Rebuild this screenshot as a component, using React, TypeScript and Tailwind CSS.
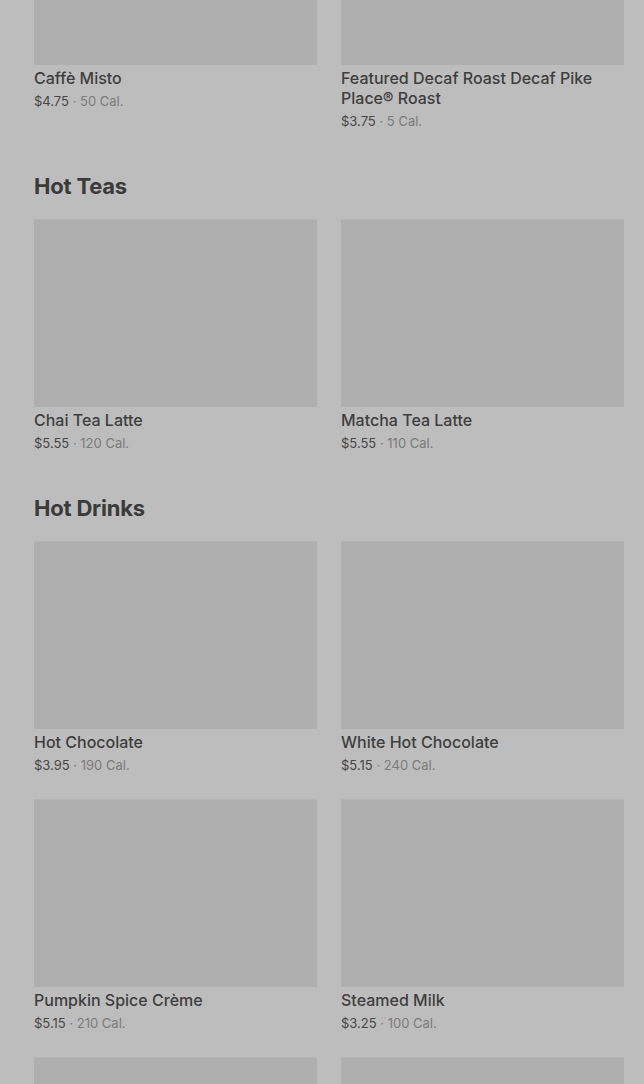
import React from "react";

type Item = { name: string; price: string; cal: string };

const sections: { title?: string; items: Item[] }[] = [
  {
    items: [
      { name: "Caffè Misto", price: "$4.75", cal: "50 Cal." },
      { name: "Featured Decaf Roast Decaf Pike Place® Roast", price: "$3.75", cal: "5 Cal." },
    ],
  },
  {
    title: "Hot Teas",
    items: [
      { name: "Chai Tea Latte", price: "$5.55", cal: "120 Cal." },
      { name: "Matcha Tea Latte", price: "$5.55", cal: "110 Cal." },
    ],
  },
  {
    title: "Hot Drinks",
    items: [
      { name: "Hot Chocolate", price: "$3.95", cal: "190 Cal." },
      { name: "White Hot Chocolate", price: "$5.15", cal: "240 Cal." },
      { name: "Pumpkin Spice Crème", price: "$5.15", cal: "210 Cal." },
      { name: "Steamed Milk", price: "$3.25", cal: "100 Cal." },
      { name: "", price: "", cal: "" },
      { name: "", price: "", cal: "" },
    ],
  },
];

const Card = ({ item }: { item: Item }) => (
  <div className="flex flex-col">
    <div className="h-[188px] bg-[#afafaf] border-t border-[#b4b4b4]" />
    {item.name && (
      <>
        <div className="mt-[3px] text-[16px] leading-[20px] font-medium text-[#3e3e3e]">{item.name}</div>
        <div className="mt-[3px] text-[13px] leading-[20px] text-[#474747]">
          {item.price}
          <span className="text-[#7b7b7b]"> · {item.cal}</span>
        </div>
      </>
    )}
  </div>
);

export default function App() {
  return (
    <div
      className="h-[1084px] overflow-hidden bg-[#bdbdbd] pl-[34px] pr-[20px]"
      style={{ fontFamily: "Inter, 'Noto Sans', sans-serif" }}
    >
      <div className="-mt-[123px] flex flex-col gap-[41px]">
        {sections.map((s, i) => (
          <section key={i}>
            {s.title && (
              <h2 className="mb-[19px] text-[22px] leading-[28px] font-bold tracking-[-0.2px] text-[#3a3a3a]">
                {s.title}
              </h2>
            )}
            <div className="grid grid-cols-2 gap-6">
              {s.items.map((it, j) => (
                <Card key={j} item={it} />
              ))}
            </div>
          </section>
        ))}
      </div>
    </div>
  );
}
